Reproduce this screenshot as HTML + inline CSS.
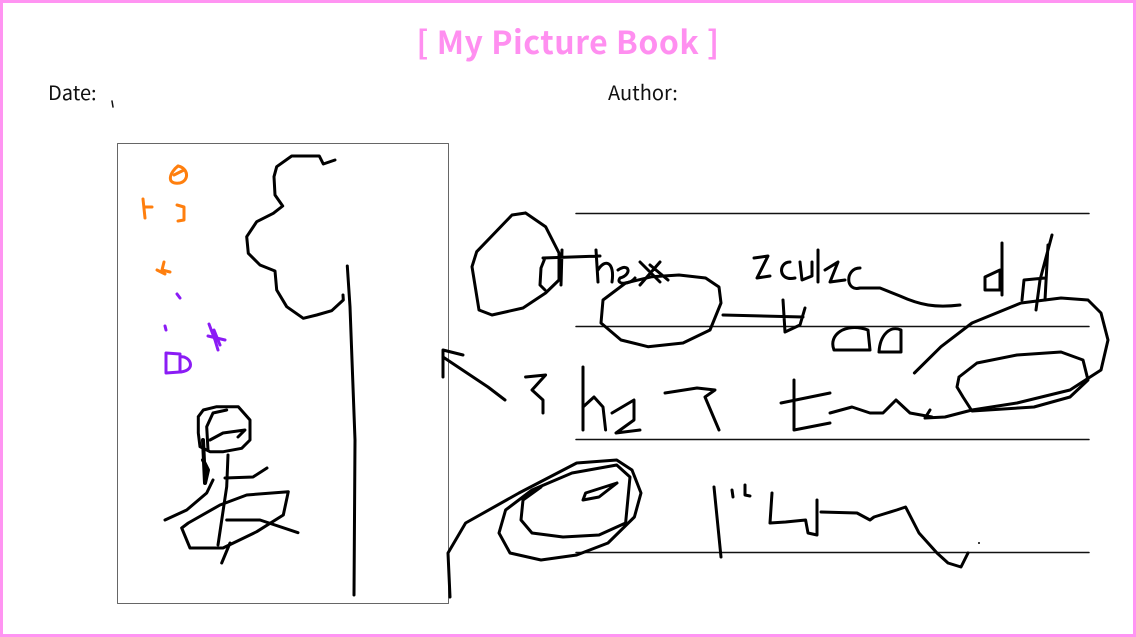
<!DOCTYPE html>
<html><head><meta charset="utf-8"><style>
html,body{margin:0;padding:0;background:#fff;}
#p{position:relative;width:1136px;height:637px;box-sizing:border-box;border:3px solid #ff94f2;overflow:hidden;}
.t{position:absolute;font-family:"Noto Sans CJK KR","Liberation Sans",sans-serif;}
</style></head><body><div id="p">
<div class="t" style="left:0;width:1130px;top:15px;text-align:center;font-size:32px;font-weight:bold;color:#ff8ff0;letter-spacing:0.5px;">[ My Picture Book ]</div>
<div class="t" style="left:45px;top:74px;font-size:20px;color:#111;">Date:</div>
<div class="t" style="left:605px;top:74px;font-size:20px;color:#111;">Author:</div>
<svg width="1136" height="637" style="position:absolute;left:-3px;top:-3px" fill="none" stroke-linecap="round" stroke-linejoin="round">
<rect x="117.5" y="143.5" width="331" height="460" stroke="#666" stroke-width="1"/>
<g stroke="#111" stroke-width="1.5">
<line x1="576" y1="213.5" x2="1089" y2="213.5"/><line x1="576" y1="326.5" x2="1089" y2="326.5"/>
<line x1="576" y1="439.5" x2="1089" y2="439.5"/><line x1="576" y1="552.5" x2="1089" y2="552.5"/>
</g>
<path d="M112,101 L113,107" stroke="#111" stroke-width="1.5"/>
<g stroke="#000" stroke-width="3">
<polyline points="335,160 323.3,164 319.3,156 291.7,156 276.7,166.7 274,176.7 275,195 282.7,206 273.3,213.3 256.7,221.7 246.7,236.7 248.3,253.3 260,265 275,271 276.7,290 286.7,306.7 303.3,318.3 316.7,315 331.7,310.7 343.3,300 343,295"/>
<polyline points="347.3,266 350,306.7 355,440 354,595"/>
<polyline points="198.3,416.7 203.3,410 216.7,406.7 238.3,406.7 250,420 250,440 241.7,448.3 223.3,451.7 210,451.7 200,446.7 198.3,433 198.3,416.7"/>
<polyline points="210,440 223,433 245,430 238,437"/>
<polyline points="208,450 206.7,426.7 213,413 226.7,410"/>
<polyline points="203,440 205,483 208,470 203,460" stroke-width="4"/>
<polyline points="228,455 226.7,486.7 218,545"/>
<polyline points="225,478 253,477 267,468"/>
<polyline points="165,520 186.7,510 206.7,493 213,480"/>
<polyline points="181.7,528 190,548 223,548 256.7,531.7 283.3,515 288.3,491.7 246.7,495 220,505 188.3,523 181.7,528"/>
<polyline points="226.7,520 260,520 298,532.7"/>
<polyline points="230,543 221.7,563"/>
<polyline points="525.6,213 512,215 476.7,251.7 472,266.7 479,310 492,315 523,308 545.6,293 559,280 559,253 545.6,226.7 525.6,213"/>
<polyline points="625.6,283 603,300 601,323 621,340 648,346.7 683,343 710,330 721,303 719,287 705.6,278 679,275 652,276.7 625.6,283"/>
<path d="M545,258 L541,268 L540,285 L545,290 M543,258 L600,256 M562,250 L561,285 M596,250 L598,282 M598,270 C605,258 615,262 612,282 M618,270 C630,262 632,275 620,278 C615,285 630,285 635,278 M640,262 L660,282 M660,262 L640,285 M650,265 L668,280"/>
<path d="M754,258 L768,256 L757,278 L770,276 M790,262 C778,262 778,282 795,278 M800,262 L802,280 L812,276 L812,262 M818,250 L818,282 M825,270 L838,262 L830,282 L845,280 M860,268 C845,268 845,292 860,288 L880,288 L900,296 C920,305 935,308 960,305"/>
<path d="M985,277 L1000,270 L1000,290 L985,290 Z M1002,243 L1002,295 M1022,300 L1024,280 L1045,278 M1052,235 L1040,280 L1036,310 M1048,245 L1045,300"/>
<path d="M723,315 L803,317 M783,300 L785,332 L800,325 L805,308 M834,350 C828,335 845,322 868,330 L870,350 L834,350 M879,352 C880,335 890,325 901,330 L901,352 L879,352"/>
<polyline points="914.4,373 941,346.7 972,323 1021,303 1061,298 1088,300 1101,313 1108,340 1101,370 1070,390 1017,403 972,410 945,417 925,418 930,410"/>
<polyline points="959,377 977,363 1017,355 1061,352 1083,360 1088,380 1070,397 1034,407 972,411 963,397 957,387 959,377"/>
<path d="M443,377 L443,350 L463,355 M443,357 L488,387 L505,400"/>
<polyline points="525.6,377 545.6,375 532,390 543,400 543,413"/>
<path d="M583,367 L583,430 M583,407 L594,397 L603,407 L605.6,430 M612,413 L634,400 L634,420 L616,433 L640,430 M665,393 L697,388 M697,388 L715,390 L705,397 L719,430 M781,403 L830,393 M794,380 L794,430 L830,423 M830,413 L852,407 L870,413 L883,413 L896,400 L910,413 L932,417"/>
<polyline points="450,597 448,553 465.6,523 519,493 576.7,463 616.7,460 632,470 641,493 634.4,517 608,543 576.7,555 541,560 510,553 499,533 505.6,510 532,490 572,473 616.7,465 630,477 625.6,523 599,535 563,537 532,533 521,520 523,500 541,487"/>
<polyline points="617,483 585.6,493 583,500 599,497 617,483"/>
<path d="M714,487 L721,557 M732,490 L733,497 M745,485 L745,495 L750,496 M772,493 L770,523 L785.6,522 L805.6,520 L808,533 L817,535 L817,500 M821,512 L857,513 L870,520 L874,517 L896.7,510 L905.6,507 L919,533 L937,553 L948,563 L961,567 L968,553"/>
<circle cx="979" cy="543" r="1" fill="#000" stroke="none"/>
</g>
<g stroke="#ff7f0e" stroke-width="3">
<path d="M178,166 C170,172 165,185 180,183 C190,180 188,168 178,166 M174,175 L184,170"/>
<path d="M143,199 L145,218 M145,207 L152,207 M177,205 L184,207 L184,220 L178,221 M164,262 L162,270 L170,272 M157,270 L165,274"/>
</g>
<g stroke="#8b1cf5" stroke-width="3">
<path d="M177,294 L180,298 M165,326 L166,330 M209,324 L215,340 L218,350 M208,336 L225,340 M214,330 L220,345 M166,353 L166,373 L180,372 L180,354 Z M180,357 C190,355 197,370 181,372"/>
</g>
</svg>
</div></body></html>
